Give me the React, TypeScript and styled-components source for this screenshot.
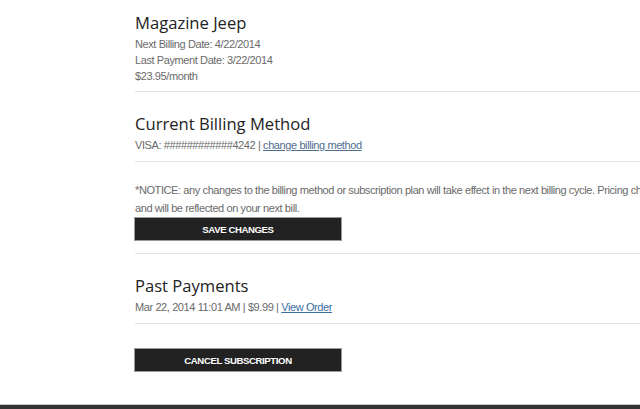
import styled, { createGlobalStyle } from "styled-components";

const GlobalStyle = createGlobalStyle`
  html, body {
    margin: 0;
    padding: 0;
    background: #ffffff;
    overflow: hidden;
  }
  body {
    font-family: "Liberation Sans", Arial, sans-serif;
  }
`;

const Page = styled.div`
  width: 640px;
  height: 409px;
  display: flex;
  flex-direction: column;
  overflow: hidden;
`;

const Content = styled.main`
  flex: 1;
  padding-left: 135px;
  width: 720px;
`;

const Section = styled.section<{ $top?: number; $bottom?: number; $last?: boolean }>`
  padding-top: ${(p) => p.$top ?? 20}px;
  padding-bottom: ${(p) => p.$bottom ?? 7}px;
  border-bottom: ${(p) => (p.$last ? "none" : "1px solid #e4e4e4")};
`;

const Heading = styled.h2`
  margin: 0 0 2px;
  font-family: "Open Sans", sans-serif;
  font-weight: 400;
  font-size: 16.6px;
  line-height: 22px;
  color: #222222;
`;

const Line = styled.p<{ $lh?: number }>`
  margin: 0;
  font-size: 11px;
  letter-spacing: -0.4px;
  line-height: ${(p) => p.$lh ?? 16}px;
  color: #6a6a6a;
  white-space: nowrap;
`;

const Link = styled.a<{ $tone?: string }>`
  color: ${(p) => p.$tone ?? "#4f6d8f"};
  text-decoration: underline;
`;

const Button = styled.button`
  display: block;
  width: 208px;
  height: 24px;
  margin: 0 0 0 -1px;
  padding: 0;
  background: #222222;
  border: 1px solid #9a9a9a;
  color: #ffffff;
  font-family: "Liberation Sans", Arial, sans-serif;
  font-weight: 700;
  font-size: 9.6px;
  letter-spacing: -0.4px;
  text-transform: uppercase;
  cursor: pointer;
`;

const Footer = styled.footer`
  height: 4px;
  background: #333333;
  border-top: 1px solid #c8c8c8;
`;

export default function App() {
  return (
    <Page>
      <GlobalStyle />
      <Content>
        <Section $top={12}>
          <Heading>Magazine Jeep</Heading>
          <Line>Next Billing Date: 4/22/2014</Line>
          <Line>Last Payment Date: 3/22/2014</Line>
          <Line>$23.95/month</Line>
        </Section>

        <Section $top={21} $bottom={8}>
          <Heading>Current Billing Method</Heading>
          <Line>
            VISA: ############4242 | <Link href="#">change billing method</Link>
          </Line>
        </Section>

        <Section $top={19} $bottom={12}>
          <Line $lh={18}>
            *NOTICE: any changes to the billing method or subscription plan will take effect in the next billing cycle. Pricing changes
          </Line>
          <Line $lh={18}>and will be reflected on your next bill.</Line>
          <Button>Save Changes</Button>
        </Section>

        <Section $top={21} $bottom={8}>
          <Heading>Past Payments</Heading>
          <Line>
            Mar 22, 2014 11:01 AM | $9.99 | <Link href="#" $tone="#3a6ea5">View Order</Link>
          </Line>
        </Section>

        <Section $top={24} $last>
          <Button>Cancel Subscription</Button>
        </Section>
      </Content>
      <Footer />
    </Page>
  );
}
